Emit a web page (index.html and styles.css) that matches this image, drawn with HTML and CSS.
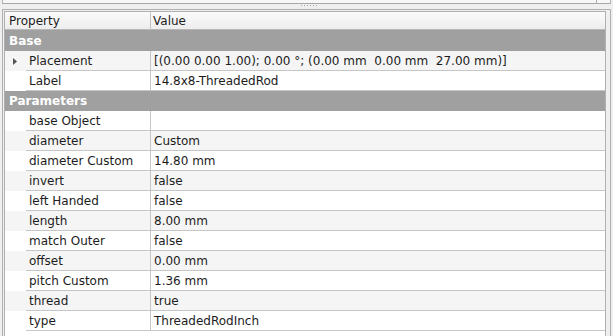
FILE: index.html
```html
<!DOCTYPE html>
<html>
<head>
<meta charset="utf-8">
<link rel="stylesheet" href="styles.css">
</head>
<body>
<div class="top-panel"><div class="top-inner"></div></div>
<div class="splitter"><span class="dot"></span><span class="dot"></span><span class="dot"></span><span class="dot"></span><span class="dot"></span><span class="dot"></span></div>
<div class="frame">
  <div class="view">
    <div class="header">
      <div class="h-name">Property</div>
      <div class="h-val">Value</div>
    </div>
    <div class="group first">Base</div>
    <div class="row alt">
      <div class="name"><span class="branch"><svg class="arrow" width="4" height="7" viewBox="0 0 4 7"><polygon points="0,0 4,3.5 0,7" fill="#555"/></svg></span><span class="label">Placement</span></div>
      <div class="val">[(0.00 0.00 1.00); 0.00 °; (0.00 mm&nbsp; 0.00 mm&nbsp; 27.00 mm)]</div>
    </div>
    <div class="row">
      <div class="name"><span class="branch"></span><span class="label">Label</span></div>
      <div class="val">14.8x8-ThreadedRod</div>
    </div>
    <div class="group">Parameters</div>
    <div class="row">
      <div class="name"><span class="branch"></span><span class="label">base Object</span></div>
      <div class="val"></div>
    </div>
    <div class="row alt">
      <div class="name"><span class="branch"></span><span class="label">diameter</span></div>
      <div class="val">Custom</div>
    </div>
    <div class="row">
      <div class="name"><span class="branch"></span><span class="label">diameter Custom</span></div>
      <div class="val">14.80 mm</div>
    </div>
    <div class="row alt">
      <div class="name"><span class="branch"></span><span class="label">invert</span></div>
      <div class="val">false</div>
    </div>
    <div class="row">
      <div class="name"><span class="branch"></span><span class="label">left Handed</span></div>
      <div class="val">false</div>
    </div>
    <div class="row alt">
      <div class="name"><span class="branch"></span><span class="label">length</span></div>
      <div class="val">8.00 mm</div>
    </div>
    <div class="row">
      <div class="name"><span class="branch"></span><span class="label">match Outer</span></div>
      <div class="val">false</div>
    </div>
    <div class="row alt">
      <div class="name"><span class="branch"></span><span class="label">offset</span></div>
      <div class="val">0.00 mm</div>
    </div>
    <div class="row">
      <div class="name"><span class="branch"></span><span class="label">pitch Custom</span></div>
      <div class="val">1.36 mm</div>
    </div>
    <div class="row alt">
      <div class="name"><span class="branch"></span><span class="label">thread</span></div>
      <div class="val">true</div>
    </div>
    <div class="row">
      <div class="name"><span class="branch"></span><span class="label">type</span></div>
      <div class="val">ThreadedRodInch</div>
    </div>
  </div>
</div>
</body>
</html>
```
FILE: styles.css
```css
html, body {
  margin: 0;
  padding: 0;
}
body {
  width: 613px;
  height: 336px;
  overflow: hidden;
  background: #efefef;
  font-family: "DejaVu Sans", sans-serif;
  font-size: 12px;
  color: #1c1c1c;
}
.top-panel {
  margin-left: 2px;
  width: 609px;
  height: 4px;
  box-sizing: border-box;
  border-left: 1px solid #b0b0b0;
  border-right: 1px solid #b0b0b0;
  border-bottom: 1px solid #a8a8a8;
  background: #f7f7f7;
  display: flex;
}
.top-inner {
  width: 593px;
  border-right: 1px solid #b0b0b0;
}
.splitter {
  height: 5px;
  display: flex;
  justify-content: center;
  gap: 2px;
  padding-left: 4px;
  box-sizing: border-box;
  padding-top: 1px;
}
.dot {
  width: 1px;
  height: 1px;
  background: #a6a6a6;
}
.frame {
  margin-left: 2px;
  width: 609px;
  height: 340px;
  box-sizing: border-box;
  border: 1px solid #b0b0b0;
  padding: 1px 2px 1px 1px;
}
.view {
  border: 1px solid #b0b0b0;
  background: #ffffff;
  height: 100%;
  box-sizing: border-box;
  width: 602px;
}
.header {
  display: flex;
  height: 18px;
  box-sizing: border-box;
  border-bottom: 1px solid #b8b8b8;
  background: linear-gradient(#fbfbfb, #ededed);
  line-height: 17px;
  padding-top: 1px;
}
.h-name {
  width: 146px;
  box-sizing: border-box;
  border-right: 1px solid #c4c4c4;
  padding-left: 4px;
  margin-top: -1px;
  padding-top: 1px;
}
.h-val {
  flex: 1;
  padding-left: 2px;
}
.group {
  height: 20px;
  box-sizing: border-box;
  padding-top: 1px;
  line-height: 19px;
  background: #a0a0a0;
  color: #ffffff;
  font-weight: bold;
  padding-left: 4px;
}
.group.first {
  height: 21px;
  padding-top: 2px;
}
.row {
  display: flex;
  height: 20px;
  background: #ffffff;
}
.row.alt {
  background: #f5f5f5;
}
.name {
  width: 146px;
  display: flex;
  box-sizing: border-box;
  border-right: 1px solid #c6c6c6;
}
.branch {
  width: 21px;
  flex: none;
  display: flex;
  align-items: center;
  padding-left: 8px;
  box-sizing: border-box;
}
.arrow {
  display: block;
}
.label {
  flex: 1;
  box-sizing: border-box;
  height: 20px;
  border-bottom: 1px solid #c6c6c6;
  padding-left: 3px;
  padding-top: 1px;
  line-height: 19px;
  white-space: nowrap;
  overflow: hidden;
}
.val {
  flex: 1;
  box-sizing: border-box;
  height: 20px;
  border-bottom: 1px solid #c6c6c6;
  padding-left: 3px;
  padding-top: 1px;
  line-height: 19px;
  white-space: nowrap;
  overflow: hidden;
}
```
